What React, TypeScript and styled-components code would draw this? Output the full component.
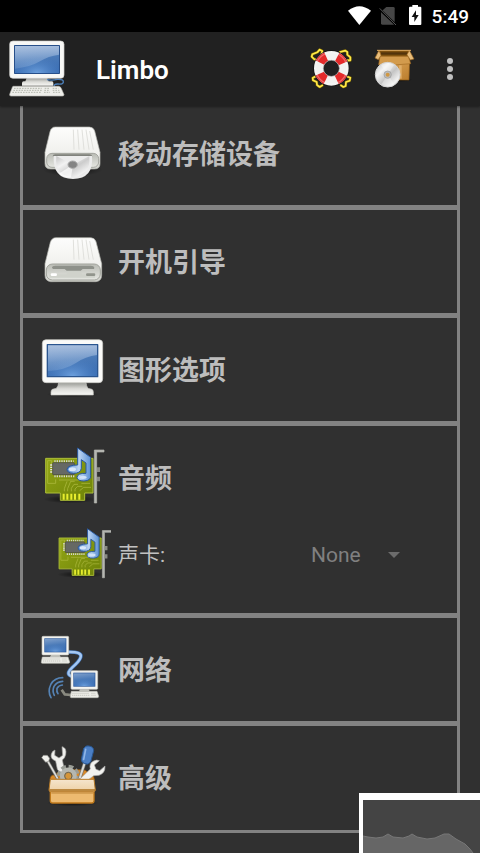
import React, { useState } from "react";
import styled, { createGlobalStyle } from "styled-components";

const GlobalStyle = createGlobalStyle`
  * { box-sizing: border-box; }
  body {
    margin: 0;
    background: #303030;
    font-family: Roboto, "Noto Sans CJK SC", sans-serif;
  }
  button, select { font-family: inherit; color: inherit; }
`;

const Screen = styled.div`
  min-height: 100vh;
  overflow: hidden;
`;

const StatusBar = styled.div`
  display: flex;
  align-items: center;
  justify-content: flex-end;
  height: 32px;
  padding-right: 11px;
  background: #000;
  color: #fff;
`;

const StatusIcons = styled.div`
  display: flex;
  height: 24px;
  margin-right: 8px;
`;

const Clock = styled.time`
  padding-top: 2px;
  font-size: 19px;
  line-height: 24px;
  font-weight: 500;
`;

const Toolbar = styled.header`
  position: relative;
  z-index: 1;
  display: flex;
  align-items: center;
  height: 74px;
  padding: 0 7px 0 8px;
  background: #212121;
  box-shadow: 0 1px 2px rgba(0, 0, 0, 0.4);
`;

const AppTitle = styled.h1`
  flex: 1;
  margin: 0 0 0 28px;
  padding-top: 2px;
  color: #fff;
  font-size: 26px;
  line-height: 32px;
  font-weight: 600;
`;

const ToolButton = styled.button<{ $width: number }>`
  display: flex;
  align-items: center;
  justify-content: center;
  width: ${(p) => p.$width}px;
  height: 64px;
  padding: 0;
  border: 0;
  background: none;
  cursor: pointer;
`;

const SectionList = styled.main`
  margin: -4px 20px 20px;
  border: 3px solid #828282;
  border-top: 0;
`;

const Section = styled.section`
  padding: 20px 17px 19px;
  & + & { border-top: 5px solid #828282; }
  &:last-child { padding-bottom: 20px; }
`;

const SectionHeading = styled.h2`
  margin: 0;
  font-size: 27px;
  line-height: 32px;
  font-weight: 700;
`;

const SectionButton = styled.button`
  display: flex;
  align-items: center;
  gap: 14px;
  width: 100%;
  padding: 0;
  border: 0;
  background: none;
  color: #bdbdbd;
  font: inherit;
  text-align: left;
  cursor: pointer;
  svg { overflow: visible; }
`;

const SectionTitle = styled.span`
  padding-top: 2px;
`;

const SettingRow = styled.div`
  display: flex;
  align-items: center;
  padding: 17px 37px 10px 14px;
`;

const SettingLabel = styled.label`
  flex: 1;
  margin-left: 7px;
  padding-bottom: 2px;
  color: #c1c1c1;
  font-size: 21px;
  line-height: 28px;
`;

const SelectBox = styled.div`
  position: relative;
  width: 92px;
  padding-bottom: 2px;
`;

const Select = styled.select`
  width: 100%;
  padding: 0;
  border: 0;
  appearance: none;
  background: none;
  color: #808080;
  font-size: 21px;
  line-height: 28px;
`;

const Arrow = styled.svg`
  position: absolute;
  top: 11px;
  right: 3px;
  pointer-events: none;
`;

const Preview = styled.aside`
  position: fixed;
  z-index: 2;
  right: 0;
  bottom: 0;
  width: 121px;
  height: 60px;
  border-top: 7px solid #fff;
  border-left: 4px solid #fff;
  background: #444;
`;

const DefsSvg = styled.svg`
  position: absolute;
`;

const SharedDefs = () => (
  <DefsSvg width="0" height="0" aria-hidden="true">
    <defs>
      <linearGradient id="screen" x1="0" y1="0" x2="0.2" y2="1">
        <stop offset="0" stopColor="#7f9fca" />
        <stop offset="0.55" stopColor="#4a7ab8" />
        <stop offset="1" stopColor="#3c6fb4" />
      </linearGradient>
      <radialGradient id="glow" cx="0.5" cy="1" r="0.6">
        <stop offset="0" stopColor="#73a6e2" stopOpacity="0.9" />
        <stop offset="1" stopColor="#4b80c4" stopOpacity="0" />
      </radialGradient>
      <linearGradient id="shine" x1="0" y1="0" x2="0" y2="1">
        <stop offset="0" stopColor="#c3d3ea" stopOpacity="0.65" />
        <stop offset="1" stopColor="#9dbbe0" stopOpacity="0.25" />
      </linearGradient>
      <linearGradient id="metal" x1="0" y1="0" x2="0" y2="1">
        <stop offset="0" stopColor="#fdfdfc" />
        <stop offset="0.7" stopColor="#efefeb" />
        <stop offset="1" stopColor="#cfd0ca" />
      </linearGradient>
      <linearGradient id="lip" x1="0" y1="0" x2="0" y2="1">
        <stop offset="0" stopColor="#b9bbb4" />
        <stop offset="1" stopColor="#e6e7e2" />
      </linearGradient>
      <linearGradient id="neck" x1="0" y1="0" x2="0" y2="1">
        <stop offset="0" stopColor="#9a9b96" />
        <stop offset="0.5" stopColor="#dcdcd8" />
        <stop offset="1" stopColor="#f7f7f4" />
      </linearGradient>
      <linearGradient id="disc" x1="0" y1="0" x2="1" y2="1">
        <stop offset="0" stopColor="#b9b9b9" />
        <stop offset="0.3" stopColor="#f4f4f4" />
        <stop offset="0.55" stopColor="#c4c4c4" />
        <stop offset="0.8" stopColor="#f2f2f2" />
        <stop offset="1" stopColor="#a8a8a8" />
      </linearGradient>
      <linearGradient id="card" x1="0" y1="0" x2="1" y2="1">
        <stop offset="0" stopColor="#93a616" />
        <stop offset="1" stopColor="#6d8207" />
      </linearGradient>
      <linearGradient id="note" x1="0" y1="0" x2="1" y2="0">
        <stop offset="0" stopColor="#4b83ca" />
        <stop offset="0.5" stopColor="#bcd5f3" />
        <stop offset="1" stopColor="#5b90d3" />
      </linearGradient>
      <linearGradient id="wood" x1="0" y1="0" x2="0" y2="1">
        <stop offset="0" stopColor="#f5e5cd" />
        <stop offset="1" stopColor="#edd0a4" />
      </linearGradient>
      <linearGradient id="carton" x1="0" y1="0" x2="1" y2="1">
        <stop offset="0" stopColor="#e2ad62" />
        <stop offset="1" stopColor="#bb7d2c" />
      </linearGradient>
      <radialGradient id="shade">
        <stop offset="0" stopColor="#000" stopOpacity="0.7" />
        <stop offset="1" stopColor="#000" stopOpacity="0" />
      </radialGradient>
    </defs>
  </DefsSvg>
);

const ComputerIcon = () => (
  <svg width="60" height="60" viewBox="24 117 180 180" aria-hidden="true">
    <ellipse cx="110" cy="284" rx="88" ry="9" fill="url(#shade)" />
    <path d="M80 234h62l4 10h10q4 0 4 5v8H66v-8q0-5 5-5h5z" fill="url(#neck)" />
    <rect x="29" y="123" width="163" height="112" rx="10" fill="#f8f8f6" stroke="#cfcfcb" strokeWidth="2" />
    <rect x="42" y="135" width="138" height="87" rx="2" fill="#274f8a" />
    <rect x="45" y="138" width="132" height="81" fill="url(#screen)" />
    <rect x="45" y="138" width="132" height="81" fill="url(#glow)" />
    <path d="M45 138h132v26q-32 4-57 20-30 18-75 22z" fill="url(#shine)" />
    <path d="M141 239q16 3 31-1 20-1 18 9-2 7-17 5-14 0-9 8" fill="none" stroke="#4c80bb" strokeWidth="4" />
    <path d="M40 259h136q6 0 9 9l7 16q0 4-5 4H33q-5 0-4-5l7-18q1-6 4-6z" fill="#eeeeea" stroke="#bcbdb7" strokeWidth="2" />
    <g stroke="#b4b7ac" strokeWidth="3" strokeDasharray="5 3">
      <path d="M42 265h83M40 271h85M37 277h86M134 265h14M133 271h16M132 277h18M158 265h17M158 271h20M159 277h22" />
    </g>
  </svg>
);

const LifebuoyIcon = () => (
  <svg width="44" height="42" viewBox="54 144 132 126" aria-hidden="true">
    {[
      "M91 164L94 153 86 149 79 157 64 163 62 170 69 177 79 181",
      "M147 156L163 152 169 156 169 164 178 172 178 181 168 181",
      "M74 229L65 234 66 241 77 246 78 255 86 261 94 256",
      "M150 256L157 261 164 258 165 246 176 242 178 233 166 229",
    ].map((d) => (
      <g key={d} fill="none" strokeLinejoin="round" strokeLinecap="round">
        <path d={d} stroke="#806a00" strokeWidth="8" />
        <path d={d} stroke="#ffe949" strokeWidth="5" />
      </g>
    ))}
    <circle cx="121" cy="205" r="38" fill="none" stroke="#111" strokeWidth="32" />
    <circle cx="121" cy="205" r="38" fill="none" stroke="#f2f2f0" strokeWidth="28" />
    <circle cx="121" cy="205" r="38" fill="none" stroke="#e42a2a" strokeWidth="28" strokeDasharray="26 33.69" strokeDashoffset="-16.8" />
    <circle cx="121" cy="205" r="47" fill="none" stroke="#fff" strokeOpacity="0.3" strokeWidth="4" />
    <circle cx="121" cy="205" r="24" fill="none" stroke="#a9a9a9" strokeWidth="2" />
  </svg>
);

const PackageIcon = () => (
  <svg width="44" height="42" viewBox="246 147 132 126" aria-hidden="true">
    <ellipse cx="325" cy="242" rx="40" ry="7" fill="url(#shade)" />
    <path d="M266 182h90l-2 61h-85z" fill="url(#carton)" stroke="#8c5714" strokeWidth="2" />
    <path d="M264 154h92v25h-92z" fill="#7e5110" />
    <path d="M270 160h80v7h-80z" fill="#52330b" />
    <path d="M267 172h85l7 22q-44 6-96 3z" fill="#d39b4d" stroke="#a36b22" strokeWidth="2" />
    <path d="M264 154l-12 23 10 5 8-13zM355 154l14 26-11 3-10-16z" fill="#e8bd7b" stroke="#9d661e" strokeWidth="2" />
    <path d="M258 154h102" stroke="#e2ae63" strokeWidth="3" />
    <path d="M328 199v40" stroke="#e0ae69" strokeWidth="8" />
    <circle cx="290" cy="227" r="37" fill="url(#disc)" stroke="#d4d4d4" strokeWidth="3" />
    <path d="M290 227L270 198q20-12 39 0zM290 227l20 29q-20 12-39 0z" fill="#fff" opacity="0.35" />
    <circle cx="290" cy="227" r="11" fill="#bcbcbc" stroke="#999" strokeWidth="2" />
    <circle cx="290" cy="227" r="6" fill="#d09843" />
  </svg>
);

const OverflowIcon = () => (
  <svg width="8" height="24" viewBox="0 0 8 24" fill="#bfbfbf" aria-hidden="true">
    <circle cx="4" cy="4" r="3" />
    <circle cx="4" cy="12" r="3" />
    <circle cx="4" cy="20" r="3" />
  </svg>
);

const DriveGrooves = () => (
  <path d="M190 74l2 60M203 74l4 60M216 74l6 60M228 74l9 60M239 78l11 56" stroke="#e0e0dc" strokeWidth="3" />
);

const OpticalIcon = () => (
  <svg width="64" height="64" viewBox="90 51 192 192" aria-hidden="true">
    <ellipse cx="188" cy="194" rx="90" ry="20" fill="url(#shade)" />
    <path d="M136 66h102q12 0 16 12l16 64v34q0 16-17 16H122q-17 0-17-16v-34l15-62q4-14 16-14z" fill="url(#metal)" stroke="#b5b6b0" strokeWidth="2" />
    <DriveGrooves />
    <rect x="110" y="145" width="156" height="42" rx="16" fill="url(#lip)" stroke="#8c8e88" strokeWidth="2" />
    <path d="M128 154q0-6 8-6h102q8 0 9 6z" fill="#80827c" />
    <path d="M131 153h115q6 68-57 69-62-1-58-69z" fill="#ececec" />
    <path d="M139 153l50 26 49-26q5 62-49 63-56-1-50-63z" fill="url(#disc)" opacity="0.8" />
    <path d="M189 179l-43 27q18 13 37 11z" fill="#fff" opacity="0.7" />
    <ellipse cx="188" cy="179" rx="14" ry="11" fill="#848484" stroke="#aaa" strokeWidth="3" />
  </svg>
);

const HardDriveIcon = () => (
  <svg width="64" height="64" viewBox="90 45 192 192" aria-hidden="true">
    <ellipse cx="190" cy="196" rx="88" ry="10" fill="url(#shade)" />
    <path d="M138 68h104q12 0 16 12l17 66v34q0 18-17 20H122q-17-2-17-20v-34l16-64q4-14 17-14z" fill="url(#metal)" stroke="#b5b6b0" strokeWidth="2" />
    <DriveGrooves />
    <rect x="109" y="147" width="162" height="48" rx="18" fill="url(#lip)" stroke="#a1a39c" strokeWidth="3" />
    <path d="M126 158q0-6 10-6h106q10 0 11 6l-1 4h-34l-6 5h-42l-6-5h-35z" fill="#8e918a" />
    <path d="M174 170h38l4 8h39v10H118v-10h52z" fill="#d0d2cb" />
    <rect x="122" y="175" width="19" height="8" rx="4" fill="#fff" />
    <rect x="228" y="175" width="28" height="8" rx="4" fill="#91948c" />
  </svg>
);

const DisplayIcon = () => (
  <svg width="64" height="64" viewBox="90 54 192 192" aria-hidden="true">
    <ellipse cx="188" cy="223" rx="80" ry="9" fill="url(#shade)" />
    <path d="M146 188h82q1 10 6 17l12 3q3 1 4 8v9H123v-9q1-7 4-8l12-3q6-7 7-17z" fill="url(#neck)" stroke="#c4c4bf" strokeWidth="2" />
    <rect x="97" y="59" width="181" height="129" rx="11" fill="#fafaf8" stroke="#c8c8c4" strokeWidth="2" />
    <rect x="110" y="72" width="155" height="100" rx="2" fill="#2a558f" />
    <rect x="114" y="76" width="147" height="92" fill="url(#screen)" />
    <rect x="114" y="76" width="147" height="92" fill="url(#glow)" />
    <path d="M114 76h147v29q-35 5-62 23-33 22-85 25z" fill="url(#shine)" />
  </svg>
);

const SoundCardIcon = ({ size }: { size: number }) => (
  <svg width={size} height={size} viewBox="90 48 192 192" aria-hidden="true">
    <ellipse cx="180" cy="208" rx="80" ry="12" fill="url(#shade)" />
    <path d="M107 85h142v104h-25v22h-73v-22h-44z" fill="url(#card)" stroke="#aebf38" strokeWidth="3" />
    <path d="M113 92v68h24v-12M113 92h12v14M147 150h60M163 184v-8l8-22M173 184v-8l9-22h12M184 184v-9l8-12h12M195 184v-7l8-8h14M209 182l12-10h22M214 160h26" fill="none" stroke="#b4bf45" strokeWidth="2" />
    <path d="M133 94h58M133 139h62" stroke="#d5d5cf" strokeWidth="6" strokeDasharray="4 3" />
    <path d="M124 103v27" stroke="#e4e4de" strokeWidth="7" strokeDasharray="4 3" />
    <rect x="128" y="98" width="65" height="36" rx="2" fill="#666964" stroke="#444" strokeWidth="2" />
    <path d="M161 191v18M172 191v18M184 191v18M195 191v18M208 191v18" stroke="#e7ed2e" strokeWidth="6" />
    <path d="M260 219h-7V60h29v6h-22z" fill="#b5b6b1" stroke="#b5b6b1" strokeWidth="2" />
    <path d="M261 112h9v14h-9zM261 140h9v14h-9z" fill="#888a84" />
    <path d="M203 54l39 28v54q2 16-20 17-20 0-21-11 2-13 27-12V99l-14-10v26q-2 15-24 15-19-1-19-12 2-13 32-13z" fill="url(#note)" stroke="#2958a0" strokeWidth="3" strokeLinejoin="round" />
    <ellipse cx="187" cy="118" rx="11" ry="6" fill="#d9e8fb" />
    <ellipse cx="219" cy="142" rx="11" ry="5" fill="#d0e2f8" />
  </svg>
);

const SmallComputer = () => (
  <g>
    <path d="M28 57h26l3 6H25z" fill="#bfc0bb" />
    <rect x="1" y="1" width="80" height="56" rx="3" fill="#f4f4f0" stroke="#c6c6c0" strokeWidth="2" />
    <rect x="8" y="7" width="66" height="42" fill="#28569a" />
    <rect x="10" y="9" width="62" height="38" fill="url(#screen)" />
    <rect x="10" y="9" width="62" height="38" fill="url(#glow)" />
    <path d="M2 63h77l5 15q0 4-4 4H2q-4 0-3-4z" fill="#ecece7" stroke="#bbbcb5" strokeWidth="2" />
    <path d="M5 69h50M4 75h52M62 69h13M62 75h14" stroke="#b5b7ad" strokeWidth="2" strokeDasharray="4 2" />
  </g>
);

const NetworkIcon = () => (
  <svg width="64" height="64" viewBox="90 69 192 192" aria-hidden="true">
    <path d="M174 111q44-1 38 16-3 11-25 30-18 17-8 24 6 5 16 4" fill="none" stroke="#4277bb" strokeWidth="11" />
    <path d="M174 111q44-1 38 16-3 11-25 30-18 17-8 24 6 5 16 4" fill="none" stroke="#a4c7f2" strokeWidth="7" />
    <g transform="translate(95 63)"><SmallComputer /></g>
    <path d="M155 224l9 14 20 2" fill="none" stroke="#8a8a80" strokeWidth="8" strokeLinejoin="round" />
    <g transform="translate(182 166)"><SmallComputer /></g>
    <g fill="none" stroke="#5583b5" strokeWidth="5" strokeLinecap="round">
      <path d="M158 188q-23 0-35 19-11 22 0 41M158 199q-18 1-26 15-6 14 1 27M157 210q-11 1-16 10-2 10 3 16" />
    </g>
  </svg>
);

const ToolboxIcon = () => (
  <svg width="64" height="64" viewBox="90 63 192 192" aria-hidden="true">
    <ellipse cx="188" cy="234" rx="78" ry="10" fill="url(#shade)" />
    <path d="M120 165q0-15 12-15l14-9q5-7 12-7h61q9 0 16 10l10 7q8 1 8 14z" fill="#d7892a" stroke="#8d540d" strokeWidth="2" />
    <path d="M108 99l35 62" stroke="#6c6c68" strokeWidth="9" />
    <path d="M108 99l35 62" stroke="#dededb" strokeWidth="5" />
    <path d="M95 98l5-7h12l7 9-3 9-9 3z" fill="#f1f1ed" stroke="#83837f" strokeWidth="2" />
    <path d="M142 133l-5-25q-17-6-13-21 2-9 11-12l-1 16 13 8 11-8-2-26q15 3 11 24-2 10-10 16l7 32-11 9z" fill="#f0f0ed" stroke="#a3a3a0" strokeWidth="2" />
    <circle cx="175" cy="153" r="26" fill="none" stroke="#9a9d96" strokeWidth="16" strokeDasharray="13 7.42" />
    <circle cx="175" cy="153" r="19" fill="#d59538" stroke="#b5b7b0" strokeWidth="13" />
    <circle cx="175" cy="153" r="11" fill="none" stroke="#62645e" strokeWidth="3" />
    <path d="M226 108l-17 52" stroke="#73736f" strokeWidth="10" />
    <path d="M226 108l-17 52" stroke="#dadad6" strokeWidth="6" />
    <path d="M221 70q6-10 16-7 14 2 14 14l-9 34q-8 10-18 5-11-4-10-13z" fill="#4b7fc5" stroke="#285690" strokeWidth="3" />
    <path d="M227 73l-6 30" stroke="#8eb5e6" strokeWidth="5" strokeLinecap="round" />
    <path d="M208 164l33-32q-5-17 10-24 9-5 17-1l-15 13 5 13 11 4 16-14q1 22-18 28l-16 1-22 17z" fill="#f2f2ef" stroke="#aaa" strokeWidth="2" />
    <rect x="121" y="194" width="131" height="40" rx="7" fill="#edba70" stroke="#c17a1b" strokeWidth="4" />
    <path d="M121 163h131l4 32q0 5-5 5H122q-5 0-5-5z" fill="url(#wood)" stroke="#b77a26" strokeWidth="3" />
    <path d="M118 195h137" stroke="#ad711c" strokeWidth="4" />
    <path d="M124 204h125" stroke="#a96d1c" strokeWidth="2" />
  </svg>
);

type SectionData = { title: string; icon: React.ReactNode; sound?: boolean };

const sections: SectionData[] = [
  { title: "移动存储设备", icon: <OpticalIcon /> },
  { title: "开机引导", icon: <HardDriveIcon /> },
  { title: "图形选项", icon: <DisplayIcon /> },
  { title: "音频", icon: <SoundCardIcon size={64} />, sound: true },
  { title: "网络", icon: <NetworkIcon /> },
  { title: "高级", icon: <ToolboxIcon /> },
];

export default function App() {
  const [soundOpen, setSoundOpen] = useState(true);
  return (
    <Screen>
      <GlobalStyle />
      <SharedDefs />
      <StatusBar>
        <StatusIcons>
          <svg width="76" height="24" viewBox="177 12 228 72" aria-hidden="true">
            <path d="M177 32q34-27 69 0l-35 43z" fill="#fff" />
            <path d="M292 21h21q4 0 4 4v45q0 4-4 4h-33q-4 0-4-4V35z" fill="#474747" />
            <path d="M270 26l51 49" stroke="#000" strokeWidth="7" />
            <path d="M272 25l49 50" stroke="#555" strokeWidth="3" />
            <path d="M370 20v-5h17v5h7q3 0 3 4v48q0 3-3 3h-31q-3 0-3-3V24q0-4 3-4z" fill="#fff" />
            <path d="M381 31l-13 20h8v15l13-21h-8z" fill="#111" />
          </svg>
        </StatusIcons>
        <Clock>5:49</Clock>
      </StatusBar>
      <Toolbar>
        <ComputerIcon />
        <AppTitle>Limbo</AppTitle>
        <ToolButton $width={64} aria-label="Help"><LifebuoyIcon /></ToolButton>
        <ToolButton $width={64} aria-label="Install"><PackageIcon /></ToolButton>
        <ToolButton $width={46} aria-label="More options"><OverflowIcon /></ToolButton>
      </Toolbar>
      <SectionList>
        {sections.map((s) => (
          <Section key={s.title}>
            <SectionHeading>
              <SectionButton
                aria-expanded={s.sound ? soundOpen : false}
                onClick={s.sound ? () => setSoundOpen(!soundOpen) : undefined}
              >
                {s.icon}
                <SectionTitle>{s.title}</SectionTitle>
              </SectionButton>
            </SectionHeading>
            {s.sound && soundOpen && (
              <SettingRow>
                <SoundCardIcon size={57} />
                <SettingLabel htmlFor="sound-card">声卡:</SettingLabel>
                <SelectBox>
                  <Select id="sound-card" defaultValue="None">
                    <option>None</option>
                  </Select>
                  <Arrow width="12" height="6" viewBox="0 0 12 6" aria-hidden="true">
                    <path d="M0 0h12L6 6z" fill="#6c6c6c" />
                  </Arrow>
                </SelectBox>
              </SettingRow>
            )}
          </Section>
        ))}
      </SectionList>
      <Preview aria-hidden="true">
        <svg width="117" height="53" viewBox="0 0 117 53">
          <path d="M0 36l5 1 8 1 7-1 5-3 5 3 10 1 6-2 3-2 5 3 10 2 8-1 9-4h5l7 5 9 5 5 5 3 4H0z" fill="#666" />
          <path d="M0 36l5 1 8 1 7-1 5-3 5 3 10 1 6-2 3-2 5 3 10 2 8-1 9-4h5l7 5 9 5 5 5 3 4" fill="none" stroke="#777" />
        </svg>
      </Preview>
    </Screen>
  );
}
